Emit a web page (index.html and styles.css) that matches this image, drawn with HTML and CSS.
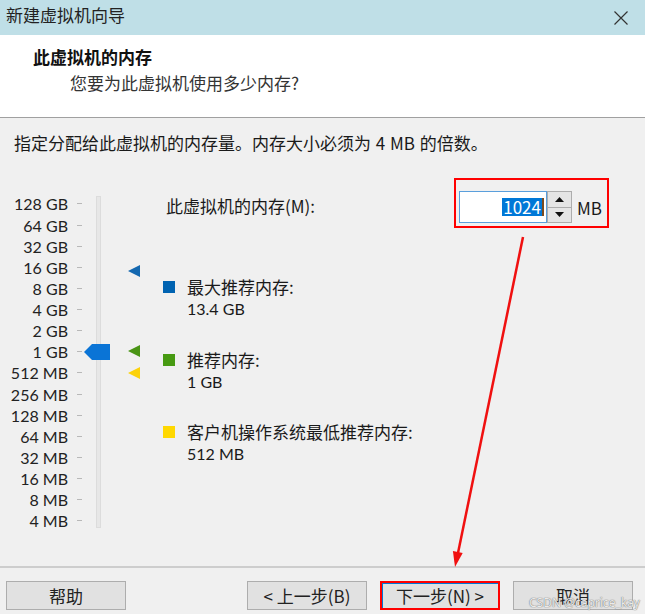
FILE: index.html
```html
<!DOCTYPE html>
<html lang="zh-CN">
<head>
    <meta charset="UTF-8">
    <title>新建虚拟机向导</title>
    <link rel="stylesheet" href="styles.css">
</head>
<body>
    <div class="window">
        <div class="titlebar">
            <span class="title">新建虚拟机向导</span>
            <svg class="close" width="14" height="14" viewBox="0 0 14 14">
                <path d="M0.5 0.5 L13.5 13.5 M13.5 0.5 L0.5 13.5" stroke="#333" stroke-width="1.2" fill="none"/>
            </svg>
        </div>
        <div class="header">
            <h1>此虚拟机的内存</h1>
            <p>您要为此虚拟机使用多少内存?</p>
        </div>
        <div class="content">
            <p class="hint">指定分配给此虚拟机的内存量。内存大小必须为 4 MB 的倍数。</p>
            <div class="main">
                <div class="scale">
                    <div class="mark"><span>128 GB</span></div>
                    <div class="mark"><span>64 GB</span></div>
                    <div class="mark"><span>32 GB</span></div>
                    <div class="mark"><span>16 GB</span></div>
                    <div class="mark"><span>8 GB</span></div>
                    <div class="mark"><span>4 GB</span></div>
                    <div class="mark"><span>2 GB</span></div>
                    <div class="mark"><span>1 GB</span></div>
                    <div class="mark"><span>512 MB</span></div>
                    <div class="mark"><span>256 MB</span></div>
                    <div class="mark"><span>128 MB</span></div>
                    <div class="mark"><span>64 MB</span></div>
                    <div class="mark"><span>32 MB</span></div>
                    <div class="mark"><span>16 MB</span></div>
                    <div class="mark"><span>8 MB</span></div>
                    <div class="mark"><span>4 MB</span></div>
                    <div class="track"></div>
                    <svg class="thumb" width="26" height="16" viewBox="0 0 26 16">
                        <polygon points="0,8 8,0 26,0 26,16 8,16" fill="#0a74d6"/>
                    </svg>
                    <svg class="marker max" width="12" height="12" viewBox="0 0 12 12">
                        <polygon points="0,6 12,0 12,12" fill="#1468b0"/>
                    </svg>
                    <svg class="marker rec" width="12" height="12" viewBox="0 0 12 12">
                        <polygon points="0,6 12,0 12,12" fill="#4a9415"/>
                    </svg>
                    <svg class="marker min" width="12" height="12" viewBox="0 0 12 12">
                        <polygon points="0,6 12,0 12,12" fill="#fcd20a"/>
                    </svg>
                </div>
                <div class="settings">
                    <div class="mem-row">
                        <label>此虚拟机的内存(M):</label>
                        <div class="highlight">
                            <div class="spin-input"><span class="sel">1024</span><span class="caret"></span></div>
                            <div class="spin-btns">
                                <div class="spin-btn"><svg width="9" height="5" viewBox="0 0 9 5"><polygon points="0,5 4.5,0 9,5" fill="#111"/></svg></div>
                                <div class="spin-btn"><svg width="9" height="5" viewBox="0 0 9 5"><polygon points="0,0 9,0 4.5,5" fill="#111"/></svg></div>
                            </div>
                            <span class="unit">MB</span>
                        </div>
                    </div>
                    <ul class="legend">
                        <li><i class="sq blue"></i><div><span class="name">最大推荐内存:</span><span class="val">13.4 GB</span></div></li>
                        <li><i class="sq green"></i><div><span class="name">推荐内存:</span><span class="val">1 GB</span></div></li>
                        <li><i class="sq yellow"></i><div><span class="name">客户机操作系统最低推荐内存:</span><span class="val">512 MB</span></div></li>
                    </ul>
                </div>
            </div>
        </div>
        <div class="footer">
            <button class="btn">帮助</button>
            <button class="btn back">&lt; 上一步(B)</button>
            <button class="btn next">下一步(N) &gt;</button>
            <button class="btn">取消</button>
        </div>
        <svg class="arrow" width="645" height="614" viewBox="0 0 645 614">
            <line x1="523" y1="237" x2="458" y2="553" stroke="#f01010" stroke-width="2.5"/>
            <polygon points="455,567 462.7,553 452.9,551" fill="#f01010"/>
        </svg>
        <span class="watermark">CSDN @caprice_kay</span>
    </div>
</body>
</html>
```

FILE: styles.css
```css
* {
    margin: 0;
    padding: 0;
    box-sizing: border-box;
}
body {
    background: #fff;
    font-family: "Noto Sans CJK SC", "Noto Sans", sans-serif;
    font-size: 17px;
    color: #1a1a1a;
}
.window {
    position: relative;
    width: 645px;
    height: 614px;
    background: #f0f0f0;
    display: flex;
    flex-direction: column;
    overflow: hidden;
}

/* 标题栏 */
.titlebar {
    height: 35px;
    flex: none;
    background: #bfdfe7;
    display: flex;
    align-items: flex-start;
    justify-content: space-between;
    padding: 3px 17px 0 6px;
}
.title {
    line-height: 24px;
    color: #222;
}
.close {
    margin-top: 8px;
}

/* 顶部说明 */
.header {
    height: 83px;
    flex: none;
    background: #fff;
    border-bottom: 1px solid #a0a0a0;
    padding-top: 9px;
}
.header h1 {
    font-size: 17px;
    font-weight: bold;
    line-height: 26px;
    padding-left: 33px;
    color: #111;
}
.header p {
    line-height: 26px;
    padding-left: 70px;
    color: #333;
}

/* 内容区 */
.content {
    flex: 1;
}
.hint {
    line-height: 24px;
    padding: 13px 14px 0;
    word-spacing: 1px;
}
.main {
    display: flex;
    margin-top: 23px;
}
.scale {
    position: relative;
    width: 150px;
    flex: none;
    padding-top: 15.4px;
}
.mark {
    display: flex;
    align-items: center;
    height: 21.14px;
}
.mark span {
    display: block;
    width: 68px;
    text-align: right;
    font-family: Lato, "Noto Sans", sans-serif;
    font-size: 16px;
    line-height: 17px;
    color: #222;
}
.mark:after {
    content: '';
    width: 5px;
    height: 1px;
    margin-left: 9px;
    background: #b8b8b8;
}
.track {
    position: absolute;
    left: 96px;
    top: 18px;
    width: 5px;
    height: 332px;
    background: #e7e7e7;
    border: 1px solid #dcdcdc;
}
.thumb {
    position: absolute;
    left: 84px;
    top: 166px;
}
.marker {
    position: absolute;
    left: 128px;
}
.marker.max { top: 87px; }
.marker.rec { top: 167px; }
.marker.min { top: 189px; }

.settings {
    flex: 1;
    padding-left: 13px;
}
.mem-row {
    display: flex;
    justify-content: space-between;
    align-items: flex-start;
    padding-right: 36px;
}
.mem-row label {
    margin: 16px 0 0 3px;
    line-height: 24px;
}
.highlight {
    display: flex;
    align-items: center;
    border: 2px solid #ff0000;
    padding: 11px 4px 3px 3px;
}
.spin-input {
    width: 88px;
    height: 32px;
    background: #fff;
    border: 1px solid #5a9fdc;
    display: flex;
    align-items: center;
    justify-content: flex-end;
    padding-right: 2px;
}
.sel {
    background: #0078d7;
    color: #fff;
    line-height: 18px;
    padding: 0 1px;
}
.caret {
    width: 2px;
    height: 18px;
    background: #7a4b20;
}
.spin-btns {
    width: 25px;
    height: 32px;
    display: flex;
    flex-direction: column;
}
.spin-btn {
    flex: 1;
    background: #e5e5e5;
    border: 1px solid #adadad;
    display: flex;
    align-items: center;
    justify-content: center;
}
.spin-btn + .spin-btn {
    border-top: none;
}
.unit {
    width: 26px;
    margin-left: 5px;
}
.legend {
    list-style: none;
    margin-top: 48px;
}
.legend li {
    display: flex;
    gap: 12px;
    margin-bottom: 28.5px;
}
.legend .name,
.legend .val {
    display: block;
    height: 22px;
    line-height: 22px;
}
.legend .val {
    font-family: Lato, "Noto Sans", sans-serif;
    font-size: 16px;
}
.sq {
    width: 12px;
    height: 12px;
    margin-top: 5px;
    flex: none;
}
.sq.blue { background: #0063b1; }
.sq.green { background: #479a12; }
.sq.yellow { background: #ffd800; }

/* 底部按钮 */
.footer {
    height: 48px;
    flex: none;
    border-top: 2px solid #cdcdcd;
    display: flex;
    gap: 13px;
    padding: 13px 12px 0 6px;
}
.btn {
    width: 120px;
    height: 29px;
    background: #e1e1e1;
    border: 1px solid #adadad;
    font: inherit;
    font-size: 17px;
    line-height: 26px;
    color: #222;
}
.btn.back {
    margin-left: auto;
}
.btn.next {
    border: 2px solid #ff0000;
    box-shadow: inset 1px 1px 0 #0078d7;
}

/* 标注 */
.arrow {
    position: absolute;
    left: 0;
    top: 0;
    pointer-events: none;
}
.watermark {
    position: absolute;
    right: 5px;
    bottom: 3px;
    font-family: "Noto Sans", sans-serif;
    font-size: 12px;
    color: rgba(255, 255, 255, 0.85);
    text-shadow: 0 0 1px #777, 0 0 1px #777;
}
```
